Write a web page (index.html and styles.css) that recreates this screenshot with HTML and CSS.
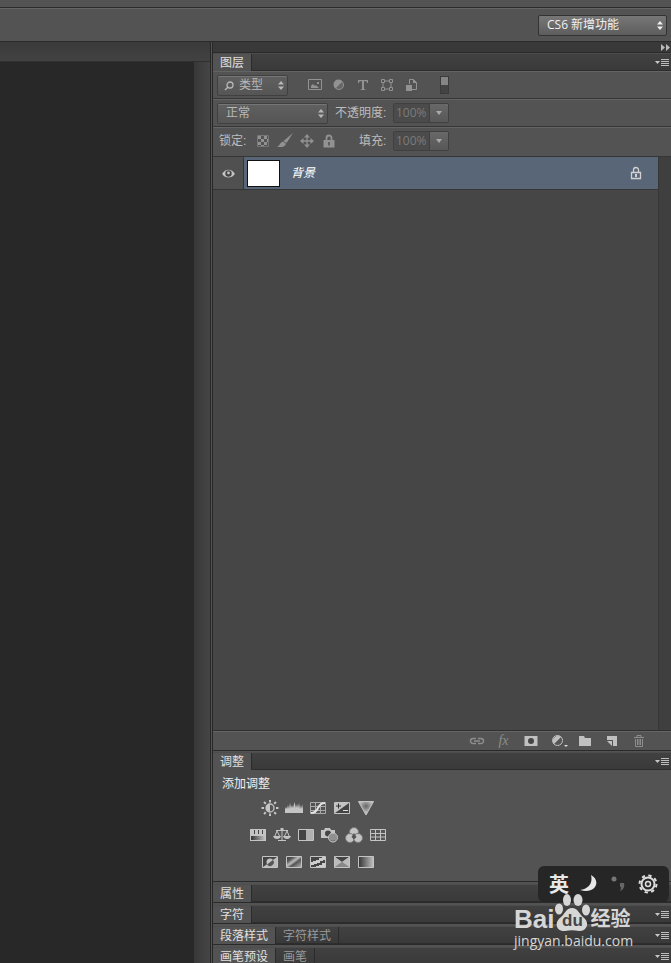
FILE: index.html
```html
<!DOCTYPE html>
<html lang="zh-CN">
<head>
<meta charset="utf-8">
<title>CS6</title>
<link rel="stylesheet" href="styles.css">
</head>
<body>
<svg class="defs" aria-hidden="true">
  <defs>
    <linearGradient id="fade"><stop offset="0" stop-color="#333"/><stop offset="1" stop-color="#c2c2c2"/></linearGradient>
    <linearGradient id="diag" x1="0" y1="0" x2="1" y2="1"><stop offset="0" stop-color="#444"/><stop offset=".25" stop-color="#555"/><stop offset=".45" stop-color="#bbb"/><stop offset=".6" stop-color="#555"/><stop offset="1" stop-color="#bbb"/></linearGradient>
    <radialGradient id="tri" cx=".5" cy=".35" r=".5"><stop offset="0" stop-color="#666"/><stop offset="1" stop-color="#c4c4c4"/></radialGradient>
    <symbol id="menu" viewBox="0 0 14 9"><path d="M0 3h5L2.500 6z" fill="#c8c8c8"/><path d="M6 1.500h8M6 3.500h8M6 5.500h8M6 7.500h8" stroke="#bdbdbd"/></symbol>
    <symbol id="lock" viewBox="0 0 16 16"><path d="M5.500 8V5a2.500 2.500 0 0 1 5 0V8" fill="none" stroke="currentColor" stroke-width="1.800"/><path d="M2.500 7h11v7.500h-11zM7.200 9v3.500h1.600V9z" fill="currentColor" fill-rule="evenodd"/></symbol>
  </defs>
</svg>
<div class="app">
  <div class="top-strip"></div>
  <header class="options-bar">
    <div class="select workspace">
      <select aria-label="工作区"><option>CS6 新增功能</option></select>
      <svg class="arrows" viewBox="0 0 6 9"><path d="M0 3.500 3 0l3 3.500zM0 5.500h6L3 9z"/></svg>
    </div>
  </header>
  <main class="workspace-area">
    <section class="document">
      <div class="document-tabs"></div>
      <div class="document-body"><div class="canvas"></div><div class="scroll-track"></div></div>
    </section>
    <aside class="dock">
      <div class="dock-head"><button class="collapse" aria-label="折叠"><svg width="9" height="7" viewBox="0 0 9 7"><path d="M0 0l4 3.500L0 7zM5 0l4 3.500L5 7z" fill="#bbb"/></svg></button></div>

      <section class="panel layers">
        <div class="tabs"><button class="tab active">图层</button><button class="menu" aria-label="菜单"><svg width="14" height="9"><use href="#menu"/></svg></button></div>
        <div class="row filter-row">
          <div class="select kind">
            <svg class="search" viewBox="0 0 10 10"><circle cx="6" cy="4" r="3" fill="none" stroke="currentColor" stroke-width="1.300"/><path d="M4 6 1 9" stroke="currentColor" stroke-width="1.500"/></svg>
            <select aria-label="过滤类型"><option>类型</option></select>
            <svg class="arrows" viewBox="0 0 6 9"><path d="M0 3.500 3 0l3 3.500zM0 5.500h6L3 9z"/></svg>
          </div>
          <div class="filters">
            <button aria-label="像素"><svg viewBox="0 0 16 16"><path d="M1.500 2.500h13v10h-13z" fill="none" stroke="currentColor"/><path d="M4 11V9l2-2 2 2 1-1 3 3zM10 5h2v2h-2z" fill="currentColor"/></svg></button>
            <button aria-label="调整"><svg viewBox="0 0 16 16"><circle cx="8" cy="8" r="5" fill="#666"/><path d="M11.500 4.500A5 5 0 1 0 4.500 11.500z" fill="currentColor"/><circle cx="8" cy="8" r="4.500" fill="none" stroke="currentColor"/></svg></button>
            <button aria-label="文字"><svg viewBox="0 0 16 16"><path d="M3 3h10v3h-1l-.5-1.700H9V12l1.500.5v.5h-5v-.5L7 12V4.300H4.500L4 6H3z" fill="currentColor"/></svg></button>
            <button aria-label="形状"><svg viewBox="0 0 16 16"><path d="M4 4h8v8H4z" fill="none" stroke="currentColor"/><path d="M2.500 2.500h3v3h-3zm8 0h3v3h-3zm-8 8h3v3h-3zm8 0h3v3h-3z" fill="#535353" stroke="currentColor"/></svg></button>
            <button aria-label="智能对象"><svg viewBox="0 0 16 16"><path d="M6.500 7V2.500h4l3 3v7H9" fill="none" stroke="currentColor"/><path d="M10 2v4h4zM3 8h6v6H3z" fill="currentColor"/></svg></button>
          </div>
          <button class="toggle" aria-label="过滤开关"></button>
        </div>
        <div class="row mode-row">
          <div class="select blend">
            <select aria-label="混合模式"><option>正常</option></select>
            <svg class="arrows" viewBox="0 0 6 9"><path d="M0 3.500 3 0l3 3.500zM0 5.500h6L3 9z"/></svg>
          </div>
          <label class="amount-label" for="opacity">不透明度:</label>
          <div class="amount"><input id="opacity" value="100%"><button aria-label="不透明度选项"><svg viewBox="0 0 6 4"><path d="M0 0h6L3 4z" fill="#aaa"/></svg></button></div>
        </div>
        <div class="row lock-row">
          <span class="lock-label">锁定:</span>
          <div class="locks">
            <button aria-label="锁定透明"><svg viewBox="0 0 16 16"><path d="M2.500 2.500h11v11h-11z" fill="none" stroke="#777"/><path d="M3 3h3v3H3zM9 3h3v3H9zM6 6h3v3H6zM3 9h3v3H3zM9 9h3v3H9zM12 6h1v3h-1zM6 12h3v1H6z" fill="currentColor"/></svg></button>
            <button aria-label="锁定像素"><svg viewBox="0 0 16 16"><path d="M16 0 9.500 10 6.500 8zM6 8.500 9 10.700C8 14.500 3 14.500 0 13.500c3-.5 2.500-4 6-5z" fill="currentColor"/></svg></button>
            <button aria-label="锁定位置"><svg viewBox="0 0 16 16"><path d="M8 3v10M3 8h10" stroke="currentColor" stroke-width="1.300"/><path d="M8 1l3 3.500H5zM8 15l3-3.500H5zM1 8l3.500-3v6zM15 8l-3.500-3v6z" fill="currentColor"/></svg></button>
            <button aria-label="锁定全部"><svg><use href="#lock"/></svg></button>
          </div>
          <label class="amount-label" for="fill">填充:</label>
          <div class="amount"><input id="fill" value="100%"><button aria-label="填充选项"><svg viewBox="0 0 6 4"><path d="M0 0h6L3 4z" fill="#aaa"/></svg></button></div>
        </div>
        <div class="list-wrap">
          <div class="layer-list">
            <div class="layer">
              <button class="eye" aria-label="可见性"><svg viewBox="0 0 16 16"><path d="M2 8.500C4.500 3 11.500 3 14 8.500 11 13 5 13 2 8.500z" fill="#c4c4c4"/><circle cx="8" cy="8" r="3" fill="#464646"/><circle cx="8" cy="7.500" r="1.300" fill="#c4c4c4"/></svg></button>
              <div class="thumb"></div>
              <span class="layer-name">背景</span>
              <svg class="layer-lock" viewBox="0 0 16 16"><path d="M5.500 7V5a2.500 2.500 0 0 1 5 0v2M3.500 7.500h9v6h-9z" fill="none" stroke="currentColor" stroke-width="1.300"/><path d="M7 9h2v3H7z" fill="currentColor"/></svg>
            </div>
          </div>
          <div class="list-scroll"></div>
        </div>
        <div class="layer-actions">
          <button class="dim" aria-label="链接"><svg viewBox="0 0 16 16"><path d="M7 10.500H4a2.500 2.500 0 0 1 0-5h3M9 5.500h3a2.500 2.500 0 0 1 0 5H9M5 8h6" fill="none" stroke="currentColor" stroke-width="1.500"/></svg></button>
          <button class="dim fx">fx</button>
          <button aria-label="蒙版"><svg viewBox="0 0 16 16"><path d="M1.500 3h13v10h-13z" fill="currentColor"/><circle cx="8" cy="8" r="3" fill="#444"/></svg></button>
          <button aria-label="新建调整图层"><svg viewBox="0 0 16 16"><circle cx="7.500" cy="7.500" r="5" fill="#555" stroke="currentColor"/><path d="M11 4A5 5 0 0 0 4 11z" fill="currentColor"/><path d="M14 12h4l-2 2z" fill="#ddd"/></svg></button>
          <button aria-label="新建组"><svg viewBox="0 0 16 16"><path d="M2 3h5l1 2h6v8H2z" fill="currentColor"/></svg></button>
          <button aria-label="新建图层"><svg viewBox="0 0 16 16"><path d="M3 3h10v10H9V7H3zM3 8h5v5z" fill="currentColor"/></svg></button>
          <button class="dim" aria-label="删除"><svg viewBox="0 0 16 16"><path d="M3 4.500h10M6 4V2.500h4V4M4.500 6v7.500h7V6M6.500 6v6M8 6v6M9.500 6v6" fill="none" stroke="currentColor"/></svg></button>
        </div>
      </section>

      <section class="panel">
        <div class="tabs"><button class="tab active">调整</button><button class="menu" aria-label="菜单"><svg width="14" height="9"><use href="#menu"/></svg></button></div>
        <div class="adjustments">
          <h2>添加调整</h2>
          <div class="adjust-grid">
            <div class="adjust-row">
              <button aria-label="亮度/对比度"><svg viewBox="0 0 18 16"><circle cx="9" cy="8" r="4" fill="#555" stroke="#c4c4c4" stroke-width="1.300"/><path d="M9 4a4 4 0 0 0 0 8z" fill="#c4c4c4"/><path d="M9 0v2.500M9 13.500V16M.5 8H3M15 8h2.500M3 2l1.800 1.800M13.200 12.200 15 14M3 14l1.800-1.800M13.200 3.800 15 2" stroke="#c4c4c4" stroke-width="2"/></svg></button>
              <button aria-label="色阶"><svg viewBox="0 0 18 16"><path d="M0 13V9l1-2 1 2 1-4 1 4 1-6 1 5 1-3 1 3 1.500-6L11 8l1-4 1 4 1-5 1 6 1-4 1 4 1-5v9z" fill="#c4c4c4"/></svg></button>
              <button aria-label="曲线"><svg viewBox="0 0 18 16"><path d="M1.500 2.500h15v11h-15zM6.500 2v12M11.500 2v12M1 6.500h16M1 10.500h16" fill="none" stroke="#aaa"/><path d="M2 13C11 13 7 3 16 3" fill="none" stroke="#e2e2e2" stroke-width="2"/></svg></button>
              <button aria-label="曝光度"><svg viewBox="0 0 18 16"><path d="M1.500 2.500h15v11h-15z" fill="#444" stroke="#c4c4c4"/><path d="M2 3h14L2 13z" fill="#c4c4c4"/><path d="M5.500 3.500v5M3 6h5" stroke="#333"/><path d="M10 10.500h5" stroke="#ddd"/></svg></button>
              <button aria-label="自然饱和度"><svg viewBox="0 0 18 16"><path d="M1.500 1.500h15L9 15z" fill="url(#tri)" stroke="#c4c4c4"/></svg></button>
            </div>
            <div class="adjust-row">
              <button aria-label="色相/饱和度"><svg viewBox="0 0 18 16"><path d="M1 2h16v12H1z" fill="#c4c4c4"/><path d="M5.500 3v4M9.500 3v4M13.500 3v4" stroke="#444"/><path d="M2 9h14v4H2z" fill="url(#fade)"/></svg></button>
              <button aria-label="色彩平衡"><svg viewBox="0 0 18 16"><path d="M9 1v12M3 3.500h12M5 13.500h8M4 4 1.500 10M4 4l3 6M14 4l-3 6M14 4l2.500 6" fill="none" stroke="#c4c4c4"/><path d="M0 9h8c-1 4-7 4-8 0zM10 9h8c-1 4-7 4-8 0zM7.500 1h3v3h-3z" fill="#c4c4c4"/></svg></button>
              <button aria-label="黑白"><svg viewBox="0 0 18 16"><path d="M1.500 2.500h15v11h-15z" fill="#444" stroke="#c4c4c4"/><path d="M9 3h7v10H9z" fill="#b0b0b0"/></svg></button>
              <button aria-label="照片滤镜"><svg viewBox="0 0 18 16"><path d="M0 3h3l1-2h5l1 2h4v8H0z" fill="#c4c4c4"/><circle cx="7" cy="6.500" r="3" fill="#444"/><circle cx="12" cy="10.500" r="4.500" fill="#777" stroke="#ccc"/><path d="M9 8h6M8 10h8M9 12h6" stroke="#aaa"/></svg></button>
              <button aria-label="通道混合器"><svg viewBox="0 0 18 16"><g fill="#c4c4c4" stroke="#777"><circle cx="9" cy="5" r="4.500"/><circle cx="5" cy="11" r="4.500"/><circle cx="13" cy="11" r="4.500"/></g><path d="M9 6l2.500 4L9 12.500 6.500 10z" fill="#555"/></svg></button>
              <button aria-label="颜色查找"><svg viewBox="0 0 18 16"><path d="M1.500 2.500h15v11h-15zM6.500 2v12M11.500 2v12M1 6.500h16M1 10h16" fill="#555" stroke="#c4c4c4"/></svg></button>
            </div>
            <div class="adjust-row">
              <button aria-label="反相"><svg viewBox="0 0 18 16"><path d="M1.500 2.500h15v11h-15z" fill="#444" stroke="#c4c4c4"/><path d="M2 13 16 3v10z" fill="#bbb"/><circle cx="9" cy="8" r="3.500" fill="#c4c4c4"/><path d="M6 10.500A3.500 3.500 0 0 0 12 6z" fill="#555"/></svg></button>
              <button aria-label="色调分离"><svg viewBox="0 0 18 16"><path d="M1.500 2.500h15v11h-15z" fill="url(#diag)" stroke="#c4c4c4"/></svg></button>
              <button aria-label="阈值"><svg viewBox="0 0 18 16"><path d="M1.500 2.500h15v11h-15z" fill="#444" stroke="#c4c4c4"/><path d="M2 8h2V7h3V6h3V4h3V3h3v3h-2v1h-3v2H8v1H5v1H2zM7 13v-1h3v-1h3V9h3v4z" fill="#ccc"/></svg></button>
              <button aria-label="可选颜色"><svg viewBox="0 0 18 16"><path d="M1.500 2.500h15v11h-15z" fill="#999" stroke="#c4c4c4"/><path d="M2 3h14L9 8z" fill="#444"/><path d="M2 3l7 5-7 5zM16 3 9 8l7 5z" fill="#bbb"/><path d="M2 13l7-5 7 5z" fill="#888"/></svg></button>
              <button aria-label="渐变映射"><svg viewBox="0 0 18 16"><path d="M1.500 2.500h15v11h-15z" fill="url(#fade)" stroke="#c4c4c4"/></svg></button>
            </div>
          </div>
        </div>
      </section>

      <section class="panel"><div class="tabs"><button class="tab active">属性</button><button class="menu" aria-label="菜单"><svg width="14" height="9"><use href="#menu"/></svg></button></div></section>
      <section class="panel"><div class="tabs"><button class="tab active">字符</button><button class="menu" aria-label="菜单"><svg width="14" height="9"><use href="#menu"/></svg></button></div></section>
      <section class="panel"><div class="tabs"><button class="tab active">段落样式</button><button class="tab">字符样式</button><button class="menu" aria-label="菜单"><svg width="14" height="9"><use href="#menu"/></svg></button></div></section>
      <section class="panel last"><div class="tabs"><button class="tab active">画笔预设</button><button class="tab">画笔</button><button class="menu" aria-label="菜单"><svg width="14" height="9"><use href="#menu"/></svg></button></div></section>
    </aside>
  </main>

  <div class="ime">
    <span>英</span>
    <svg viewBox="0 0 20 20"><path d="M12 1C23 7 16 21 1 16 10 15 14 9 12 1z" fill="#e8e8e8"/></svg>
    <svg viewBox="0 0 20 20"><circle cx="6" cy="5" r="2.500" fill="#777"/><path d="M12 9h4c1 4-1 7-4 8 1-2 1-3 1-4h-1z" fill="#666"/></svg>
    <svg viewBox="0 0 20 20"><g fill="none" stroke="#ddd"><circle cx="10" cy="10" r="6.500" stroke-width="2"/><circle cx="10" cy="10" r="2.500" stroke-width="1.500"/><circle cx="10" cy="10" r="8.500" stroke-width="2" stroke-dasharray="3.340 3.340"/></g></svg>
  </div>
  <div class="brand">
    <div class="brand-logo"><span class="bai">Bai</span><span class="paw"><svg viewBox="0 0 36 38"><g fill="#d6d6d6"><ellipse cx="5" cy="15" rx="4" ry="5.500"/><ellipse cx="13" cy="6" rx="4" ry="6"/><ellipse cx="24" cy="6" rx="4.500" ry="6"/><ellipse cx="32" cy="16" rx="4" ry="5.500"/><path d="M18 14c6 0 7 6 11 9 8 6 3 15-4 14-5-1-9-1-14 0-8 1-12-8-4-14 4-3 5-9 11-9z"/></g></svg><span class="du">du</span></span><span class="jy">经验</span></div>
    <div class="brand-url">jingyan.baidu.com</div>
  </div>
</div>
</body>
</html>
```
FILE: styles.css
```css
* { box-sizing: border-box; }
body {
  margin: 0;
  background: #535353;
  color: #d6d6d6;
  font: 12px/16px "Liberation Sans", "Noto Sans CJK SC", sans-serif;
}
button, input, select { font: inherit; color: inherit; }
button { border: 0; padding: 0; background: none; }
.defs { position: absolute; width: 0; height: 0; }
.app {
  position: relative;
  display: flex;
  flex-direction: column;
  height: 100vh;
  overflow: hidden;
}
.top-strip { height: 8px; border-bottom: 1px solid #2a2a2a; }
.options-bar {
  display: flex;
  align-items: center;
  justify-content: flex-end;
  height: 34px;
  padding-right: 4px;
  border-top: 1px solid #656565;
  border-bottom: 1px solid #2b2b2b;
}

.select {
  position: relative;
  border: 1px solid #333;
  border-radius: 2px;
  background: linear-gradient(#686868, #565656);
  box-shadow: inset 0 1px #767676;
}
.select select {
  display: block;
  width: 100%;
  height: 100%;
  padding: 0 8px;
  border: 0;
  appearance: none;
  background: transparent;
}
.arrows { position: absolute; right: 3px; top: 50%; width: 6px; height: 9px; margin-top: -4px; fill: currentColor; }
.workspace { width: 129px; height: 21px; color: #f0f0f0; background: linear-gradient(#777, #5d5d5d); }
.workspace select { font-family: "Open Sans", "Noto Sans CJK SC", sans-serif; }

.workspace-area { flex: 1; min-height: 0; display: grid; grid-template-columns: minmax(0, 1fr) 461px; }
.document { display: flex; flex-direction: column; }
.document-tabs { height: 20px; background: linear-gradient(#3a3a3a, #424242); border-bottom: 1px solid #303030; }
.document-body { flex: 1; display: flex; }
.canvas { flex: 1; background: #282828; }
.scroll-track { width: 16px; background: linear-gradient(90deg, #383838, #454545); }

.dock {
  display: flex;
  flex-direction: column;
  min-height: 0;
  border-left: 3px double #282828;
  background: #535353;
}
.dock-head { display: flex; flex: none; justify-content: flex-end; align-items: center; height: 11px; padding-right: 1px; background: #393939; border-bottom: 1px solid #2a2a2a; }
.collapse { display: flex; }
.panel { flex: none; margin-bottom: 2px; border-bottom: 1px solid #2a2a2a; }
.panel.last { margin-bottom: -3px; }
.panel.layers { flex: 1; min-height: 0; margin-bottom: 1px; display: flex; flex-direction: column; }
.tabs {
  display: flex;
  height: 18px;
  border-top: 1px solid #4d4d4d;
  background: linear-gradient(#414141, #393939);
  box-shadow: inset 0 -1px #2d2d2d;
}
.tab { padding: 0 7px; border-right: 1px solid #2b2b2b; color: #9a9a9a; }
.tab.active { background: #535353; color: #e0e0e0; }
.menu { display: flex; align-items: center; margin-left: auto; padding-right: 2px; }

.row { display: flex; align-items: center; height: 28px; padding-left: 4px; border-top: 1px solid #646464; border-bottom: 1px solid #363636; }
.row .select { color: #b8b8b8; border-color: #404040; background: linear-gradient(#606060, #555); }
.kind { width: 71px; height: 21px; }
.kind select { padding-left: 21px; }
.search { position: absolute; left: 6px; top: 5px; width: 10px; height: 10px; }
.filters, .locks { display: flex; color: #929292; }
.filters { margin-left: 15px; }
.filters button { width: 24px; height: 16px; }
.locks button { width: 22px; height: 16px; }
.filters svg, .locks svg, .layer-actions svg { display: block; width: 16px; height: 16px; margin: auto; }
.toggle { width: 9px; height: 18px; margin-left: 17px; border: 1px solid #3b3b3b; background: linear-gradient(#858585 0 50%, #444 50%); }
.blend { width: 111px; height: 21px; }
.amount-label, .lock-label { color: #bdbdbd; }
.mode-row .amount-label { width: 65px; padding-left: 7px; }
.lock-row { height: 30px; padding-bottom: 2px; }
.lock-label { width: 35px; padding-left: 2px; }
.lock-row .amount-label { width: 53px; padding-left: 19px; }
.amount { display: flex; width: 56px; height: 20px; border: 1px solid #404040; border-radius: 2px; }
.amount input { width: 35px; padding: 0 2px; border: 0; background: #4b4b4b; color: #7b7b7b; font-family: "Open Sans", sans-serif; }
.amount button { flex: 1; border-left: 1px solid #404040; background: linear-gradient(#686868, #585858); }
.amount svg { display: block; width: 6px; height: 4px; margin: auto; }

.list-wrap { flex: 1; display: flex; min-height: 0; }
.layer-list { flex: 1; background: #464646; }
.list-scroll { width: 13px; background: #3f3f3f; border-left: 1px solid #363636; }
.layer { display: flex; align-items: center; height: 33px; border-bottom: 1px solid #353535; background: #596678; }
.eye { width: 31px; height: 32px; border-right: 1px solid #363636; background: #505050; }
.eye svg { display: block; width: 17px; height: 17px; margin: auto; }
.thumb { width: 33px; height: 27px; margin-left: 3px; border: 1px solid #111; background: #fff; }
.layer-name { margin-left: 11px; color: #fff; font-style: italic; }
.layer-lock { width: 16px; height: 16px; margin-left: auto; margin-right: 14px; color: #d2d2d2; }
.layer-actions { display: flex; justify-content: flex-end; align-items: center; height: 19px; padding-right: 19px; border-top: 1px solid #656565; box-shadow: 0 -1px #303030; color: #c0c0c0; }
.layer-actions button { width: 27px; height: 16px; }
.layer-actions svg { overflow: visible; }
.layer-actions .dim { color: #8d8d8d; }
.layer-actions .fx { font: italic 14px/16px "Liberation Serif", serif; }

.adjustments { height: 111px; padding: 6px 0 0 9px; }
.adjustments h2 { margin: 0; font-size: 12px; font-weight: 400; line-height: 16px; color: #f0f0f0; }
.adjust-grid { width: 192px; padding-top: 2px; }
.adjust-row { display: flex; justify-content: center; height: 27px; align-items: center; }
.adjust-row button { width: 24px; height: 16px; }
.adjust-row svg { display: block; width: 18px; height: 16px; margin: auto; }

.ime {
  position: absolute;
  right: 2px;
  bottom: 61px;
  display: flex;
  align-items: center;
  justify-content: space-between;
  width: 131px;
  height: 36px;
  padding: 0 11px;
  border-radius: 6px;
  background: #262626;
  color: #e8e8e8;
  font: 700 20px/24px "Noto Sans CJK SC", sans-serif;
}
.ime svg { width: 20px; height: 20px; }
.brand { position: absolute; right: 36px; bottom: 13px; width: 121px; color: #d6d6d6; }
.brand-logo { display: flex; align-items: flex-end; height: 38px; white-space: nowrap; }
.bai { font: 700 26px/26px "Liberation Sans", sans-serif; }
.paw { position: relative; width: 36px; height: 38px; }
.paw svg { display: block; width: 36px; height: 38px; }
.du { position: absolute; left: 0; right: 0; bottom: 1px; text-align: center; color: #444; font: 700 17px/20px "Liberation Sans", sans-serif; }
.jy { font: 700 20px/28px "Noto Sans CJK SC", sans-serif; }
.brand-url { font: 14px/18px "Open Sans", sans-serif; }
```
